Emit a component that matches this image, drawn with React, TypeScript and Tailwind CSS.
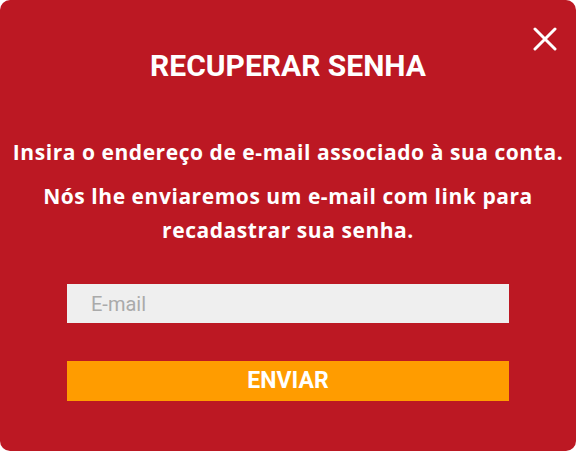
export default function App() {
  return (
    <div className="w-[576px] h-[451px] bg-white">
      <div className="relative w-full h-full bg-[#bc1823] rounded-[10px] flex flex-col items-center">
        <button className="absolute right-[19px] top-[27px] w-[24px] h-[24px]" aria-label="Fechar">
          <svg viewBox="0 0 24 24" width="24" height="24" fill="none" stroke="white" strokeWidth="3" strokeLinecap="round">
            <path d="M2 2 L22 22 M22 2 L2 22" />
          </svg>
        </button>
        <h1 className="mt-[49px] text-white text-[30px] leading-[34px] font-bold text-center" style={{ fontFamily: 'Roboto, sans-serif' }}>
          RECUPERAR SENHA
        </h1>
        <div className="mt-[52px] flex flex-col items-center gap-[10px] text-white font-bold text-[21px] leading-[34px] tracking-[0.55px] text-center" style={{ fontFamily: '"Open Sans", sans-serif' }}>
          <p className="whitespace-nowrap">Insira o endereço de e-mail associado à sua conta.</p>
          <p className="w-[520px]">Nós lhe enviaremos um e-mail com link para recadastrar sua senha.</p>
        </div>
        <input
          placeholder="E-mail"
          className="mt-[37px] w-[442px] h-[39px] bg-[#efefef] pl-[24px] text-[20px] text-gray-700 placeholder:text-[#aaaaaa] outline-none"
          style={{ fontFamily: 'Roboto, sans-serif' }}
        />
        <button
          className="mt-[38px] w-[442px] h-[40px] bg-[#ff9c00] text-white font-bold text-[23px]"
          style={{ fontFamily: 'Roboto, sans-serif' }}
        >
          ENVIAR
        </button>
      </div>
    </div>
  );
}
